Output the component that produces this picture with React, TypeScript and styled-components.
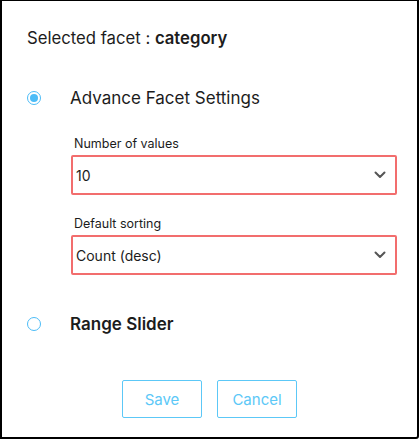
import React, { useState } from 'react';
import styled, { createGlobalStyle } from 'styled-components';

const GlobalStyle = createGlobalStyle`
  html, body {
    margin: 0;
    padding: 0;
    background: #fff;
  }
  * {
    box-sizing: border-box;
  }
`;

const Dialog = styled.div`
  width: 419px;
  height: 439px;
  border: 2px solid #000;
  border-top-width: 1px;
  border-bottom-right-radius: 3px;
  background: #fff;
  font-family: Inter, 'Open Sans', sans-serif;
  color: #1c1c1c;
  padding: 27px 0 0 25px;
  display: flex;
  flex-direction: column;
`;

const Title = styled.h2`
  margin: 0;
  font-size: 16.7px;
  font-weight: 400;
  line-height: 20px;

  b {
    font-weight: 600;
  }
`;

const OptionRow = styled.label<{ $top: number }>`
  display: flex;
  align-items: center;
  margin-top: ${(p) => p.$top}px;
  height: 22px;
  cursor: pointer;
`;

const Radio = styled.span<{ $checked: boolean }>`
  width: 14px;
  height: 14px;
  border-radius: 50%;
  border: 1.5px solid #4cbcf7;
  padding: 2px;
  flex-shrink: 0;

  &::after {
    content: '';
    display: block;
    width: 100%;
    height: 100%;
    border-radius: 50%;
    background: ${(p) => (p.$checked ? '#4cbcf7' : 'transparent')};
  }
`;

const OptionLabel = styled.span<{ $bold?: boolean }>`
  margin-left: 29px;
  font-size: 17px;
  font-weight: ${(p) => (p.$bold ? 600 : 400)};
`;

const Fields = styled.div`
  margin: 27px 0 0 44px;
  width: 326px;
  display: flex;
  flex-direction: column;
`;

const FieldLabel = styled.div`
  font-size: 12.5px;
  line-height: 16px;
  margin-bottom: 3px;
  padding-left: 3px;
`;

const SelectBox = styled.div`
  position: relative;
  height: 40px;
  border: 2px solid #f26d6d;
  border-radius: 2px;
  display: flex;
  align-items: center;
  padding: 0 36px 0 3px;
  font-size: 14px;
  margin-bottom: 21px;

  &:last-child {
    margin-bottom: 0;
  }

  svg {
    position: absolute;
    right: 9px;
    top: 50%;
    margin-top: -4px;
  }
`;

const Actions = styled.div`
  display: flex;
  justify-content: center;
  gap: 15px;
  margin: 45px 0 0 -25px;
`;

const Button = styled.button`
  width: 80px;
  height: 38px;
  background: #fff;
  border: 1px solid #5cc8f7;
  border-radius: 2px;
  color: #5cc8f7;
  font-family: inherit;
  font-size: 15px;
  cursor: pointer;
`;

function Chevron() {
  return (
    <svg width="12" height="8" viewBox="0 0 12 8">
      <path d="M1.5 1.5 L6 6 L10.5 1.5" fill="none" stroke="#555" strokeWidth="2" strokeLinecap="round" strokeLinejoin="round" />
    </svg>
  );
}

export default function App() {
  const [mode, setMode] = useState<'advance' | 'range'>('advance');

  return (
    <>
      <GlobalStyle />
      <Dialog>
        <Title>
          Selected facet : <b>category</b>
        </Title>
        <OptionRow $top={39} onClick={() => setMode('advance')}>
          <Radio $checked={mode === 'advance'} />
          <OptionLabel>Advance Facet Settings</OptionLabel>
        </OptionRow>
        <Fields>
          <FieldLabel>Number of values</FieldLabel>
          <SelectBox>
            10
            <Chevron />
          </SelectBox>
          <FieldLabel>Default sorting</FieldLabel>
          <SelectBox>
            Count (desc)
            <Chevron />
          </SelectBox>
        </Fields>
        <OptionRow $top={38} onClick={() => setMode('range')}>
          <Radio $checked={mode === 'range'} />
          <OptionLabel $bold>Range Slider</OptionLabel>
        </OptionRow>
        <Actions>
          <Button>Save</Button>
          <Button>Cancel</Button>
        </Actions>
      </Dialog>
    </>
  );
}
